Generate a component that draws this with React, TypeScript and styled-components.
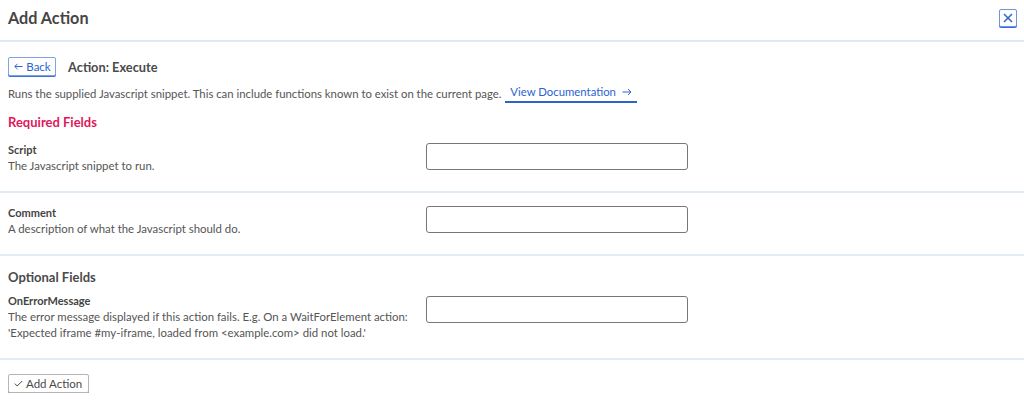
import styled, { createGlobalStyle } from 'styled-components';

const GlobalStyle = createGlobalStyle`
    body {
        margin: 0;
        background: #ffffff;
        font-family: Lato, "Open Sans", sans-serif;
        color: #4a4a4a;
    }
`;

const Page = styled.div`
    width: 1024px;
`;

const Header = styled.div`
    height: 42px;
    display: flex;
    align-items: center;
    justify-content: space-between;
    padding: 0 7px 0 8px;
    border-bottom: 2px solid #dde9f6;
    box-sizing: border-box;
`;

const Title = styled.h1`
    margin: -6px 0 0 0;
    font-size: 16.2px;
    font-weight: 700;
    color: #454545;
`;

const CloseButton = styled.button`
    width: 18px;
    height: 18px;
    padding: 0;
    display: flex;
    align-items: center;
    justify-content: center;
    background: #fff;
    border: 1px solid #6b95e0;
    border-radius: 2px;
    box-shadow: 0 1px 0 #3a6fd4;
    color: #2c63cf;
    margin-top: -4px;
`;

const Body = styled.div`
    padding: 15px 8px 0 8px;
`;

const ActionLine = styled.div`
    display: flex;
    align-items: center;
    gap: 12px;
`;

const BlueButton = styled.button`
    height: 19px;
    width: 48px;
    padding: 0 0 0 1px;
    font-family: Lato, sans-serif;
    font-size: 11.5px;
    color: #2c63cf;
    background: #fff;
    border: 1px solid #7ea3e6;
    border-radius: 2px;
    box-shadow: 0 1px 0 #3a6fd4;
    display: flex;
    align-items: center;
    justify-content: center;
    gap: 3px;
`;

const ActionName = styled.span`
    font-size: 12.8px;
    font-weight: 700;
    color: #4a4a4a;
`;

const Intro = styled.p`
    margin: 8px 0 0 0;
    font-size: 11.35px;
    line-height: 16px;
    color: #555;
    display: flex;
    align-items: center;
`;

const DocLink = styled.a`
    margin-left: 4px;
    padding: 0 5px 1px 5px;
    color: #2c63cf;
    text-decoration: none;
    border-bottom: 2px solid #2c63cf;
    display: inline-flex;
    align-items: center;
    gap: 6px;
`;

const SectionTitle = styled.h2<{ $required?: boolean }>`
    margin: 0;
    font-size: 13px;
    font-weight: 700;
    line-height: 16px;
    color: ${p => (p.$required ? '#e0185a' : '#4a4a4a')};
`;

const RequiredBlock = styled.div`
    padding-top: 11px;
`;

const Row = styled.div`
    display: grid;
    grid-template-columns: 418px 262px;
    align-items: start;
    padding: 12px 0 17px 8px;
    border-bottom: 2px solid #e2ecf7;
    margin: 0 -8px;
`;

const OptionalBlock = styled.div`
    margin: 0 -8px;
    padding-top: 13px;
`;

const OptionalHeading = styled.div`
    padding-left: 8px;
`;

const OptionalRow = styled(Row)`
    margin: 0;
    padding: 8px 0 17px 8px;
`;

const Label = styled.div`
    font-size: 11px;
    font-weight: 700;
    line-height: 16px;
    color: #444;
`;

const Hint = styled.div`
    font-size: 11.4px;
    line-height: 16px;
    color: #555;
`;

const TextInput = styled.input<{ $offset?: number }>`
    width: 262px;
    height: 27px;
    box-sizing: border-box;
    margin-top: ${p => p.$offset ?? 1}px;
    border: 1px solid #777;
    border-radius: 3px;
    background: #fff;
`;

const Footer = styled.div`
    padding: 14px 8px 0 8px;
`;

const GrayButton = styled.button`
    height: 19px;
    padding: 0 6px 0 5px;
    font-family: Lato, sans-serif;
    font-size: 11.5px;
    color: #4a4a4a;
    background: #fff;
    border: 1px solid #b5b5b5;
    border-radius: 2px;
    box-shadow: 0 1px 0 #999;
    display: flex;
    align-items: center;
    gap: 3px;
`;

const fields = {
    required: [
        { name: 'Script', hint: ['The Javascript snippet to run.'] },
        { name: 'Comment', hint: ['A description of what the Javascript should do.'] },
    ],
    optional: [
        {
            name: 'OnErrorMessage',
            hint: [
                'The error message displayed if this action fails. E.g. On a WaitForElement action:',
                "'Expected iframe #my-iframe, loaded from <example.com> did not load.'",
            ],
        },
    ],
};

function App() {
    return (
        <Page>
            <GlobalStyle />
            <Header>
                <Title>Add Action</Title>
                <CloseButton>
                    <svg width="12" height="12" viewBox="0 0 12 12">
                        <path d="M2 2 L10 10 M10 2 L2 10" stroke="currentColor" strokeWidth="1.5" fill="none" />
                    </svg>
                </CloseButton>
            </Header>
            <Body>
                <ActionLine>
                    <BlueButton>
                        <svg width="9" height="7" viewBox="0 0 9 7">
                            <path d="M8.5 3.5 H1 M3.5 0.8 L0.8 3.5 L3.5 6.2" stroke="currentColor" strokeWidth="1" fill="none" />
                        </svg>
                        Back
                    </BlueButton>
                    <ActionName>Action: Execute</ActionName>
                </ActionLine>
                <Intro>
                    Runs the supplied Javascript snippet. This can include functions known to exist on the current page.
                    <DocLink href="#">
                        View Documentation
                        <svg width="10" height="8" viewBox="0 0 10 8">
                            <path d="M0.5 4 H9 M6 1 L9 4 L6 7" stroke="currentColor" strokeWidth="1" fill="none" />
                        </svg>
                    </DocLink>
                </Intro>
                <RequiredBlock>
                    <SectionTitle $required>Required Fields</SectionTitle>
                </RequiredBlock>
                {fields.required.map(f => (
                    <Row key={f.name}>
                        <div>
                            <Label>{f.name}</Label>
                            {f.hint.map(h => <Hint key={h}>{h}</Hint>)}
                        </div>
                        <TextInput />
                    </Row>
                ))}
                <OptionalBlock>
                    <OptionalHeading>
                        <SectionTitle>Optional Fields</SectionTitle>
                    </OptionalHeading>
                    {fields.optional.map(f => (
                        <OptionalRow key={f.name}>
                            <div>
                                <Label>{f.name}</Label>
                                {f.hint.map(h => <Hint key={h}>{h}</Hint>)}
                            </div>
                            <TextInput $offset={3} />
                        </OptionalRow>
                    ))}
                </OptionalBlock>
            </Body>
            <Footer>
                <GrayButton>
                    <svg width="9" height="7" viewBox="0 0 9 7">
                        <path d="M0.8 3.6 L3.2 6 L8.2 1" stroke="currentColor" strokeWidth="1" fill="none" />
                    </svg>
                    Add Action
                </GrayButton>
            </Footer>
        </Page>
    );
}

export default App;
